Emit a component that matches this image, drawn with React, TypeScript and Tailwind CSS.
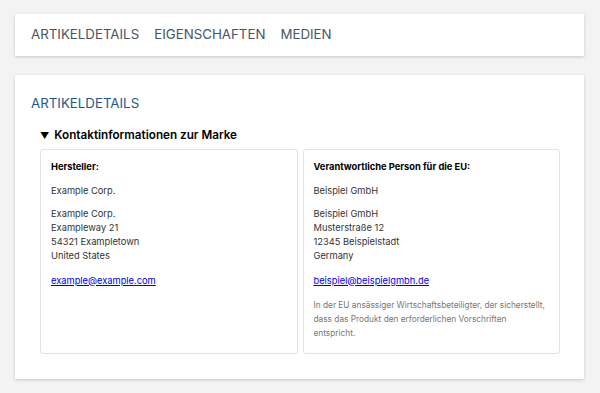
const tabs = ["ARTIKELDETAILS", "EIGENSCHAFTEN", "MEDIEN"];

type ContactBoxProps = {
  title: string;
  name: string;
  address: string[];
  email: string;
  note?: string;
};

const ContactBox = ({ title, name, address, email, note }: ContactBoxProps) => {
  return (
    <div className="flex-1 rounded-[3px] border border-[#e3e3e3] bg-white px-[10px] pt-[10px] pb-[13px] text-[9.3px] leading-[14px] text-[#333]">
      <p className="font-bold text-black">{title}</p>
      <p className="mt-[10px]">{name}</p>
      <p className="mt-[9px]">
        {address.map((line) => (
          <span key={line} className="block">
            {line}
          </span>
        ))}
      </p>
      <a href="#" className="mt-[11px] block text-[#0000ee] underline">
        {email}
      </a>
      {note && (
        <p className="mt-[10px] text-[8.3px] leading-[14px] text-[#777]">{note}</p>
      )}
    </div>
  );
};

export default function App() {
  return (
    <div
      className="min-h-[393px] bg-[#f3f3f3] pl-[15px] pr-[16px] pt-[14px] pb-[15px]"
      style={{ fontFamily: "Inter, 'Liberation Sans', sans-serif" }}
    >
      <nav className="flex h-[42px] items-center gap-[15px] bg-white px-[16px] shadow-[0_1px_3px_rgba(0,0,0,0.18)]">
        {tabs.map((tab) => (
          <span key={tab} className="text-[13.3px] text-[#4a5563]">
            {tab}
          </span>
        ))}
      </nav>

      <section className="mt-[19px] bg-white px-[16px] pt-[18px] pb-[25px] shadow-[0_1px_3px_rgba(0,0,0,0.18)]">
        <h2 className="text-[13.3px] leading-[20px] text-[#1d5a8c]">ARTIKELDETAILS</h2>
        <div className="mt-[14px] pl-[9px] pr-[8px]">
          <div className="flex items-center gap-[5px] text-[11.7px] font-semibold text-black">
            <span className="text-[9px]">▼</span>
            <span>Kontaktinformationen zur Marke</span>
          </div>
          <div className="mt-[4px] flex gap-[5px]">
            <ContactBox
              title="Hersteller:"
              name="Example Corp."
              address={["Example Corp.", "Exampleway 21", "54321 Exampletown", "United States"]}
              email="example@example.com"
            />
            <ContactBox
              title="Verantwortliche Person für die EU:"
              name="Beispiel GmbH"
              address={["Beispiel GmbH", "Musterstraße 12", "12345 Beispielstadt", "Germany"]}
              email="beispiel@beispielgmbh.de"
              note="In der EU ansässiger Wirtschaftsbeteiligter, der sicherstellt, dass das Produkt den erforderlichen Vorschriften entspricht."
            />
          </div>
        </div>
      </section>
    </div>
  );
}
